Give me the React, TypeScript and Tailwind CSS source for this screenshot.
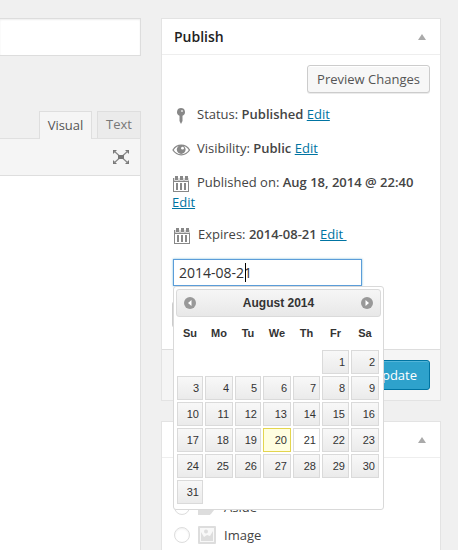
import React from "react";

const CollapseArrow = () => (
  <svg width="8" height="6" viewBox="0 0 8 6" aria-hidden="true">
    <path d="M4 0l4 6H0z" fill="#aaa" />
  </svg>
);

const rowIcon = "-my-1 mr-1.5 inline-block align-middle";

const PinIcon = () => (
  <svg className={rowIcon} width="19" height="18" viewBox="0 0 19 18" aria-hidden="true">
    <path d="M9 1a4 4 0 0 1 1.500 7.700V14L9 17 7.500 14V8.700A4 4 0 0 1 9 1z" fill="#888" />
    <circle cx="10" cy="4" r="1.100" fill="#ddd" />
  </svg>
);

const EyeIcon = () => (
  <svg className={rowIcon} width="19" height="18" viewBox="0 0 19 18" aria-hidden="true">
    <path d="M1 9C5 2.600 13.500 2.600 17.500 9 13.500 15.400 5 15.400 1 9z" fill="#fff" stroke="#888" strokeWidth="1.300" />
    <circle cx="9.200" cy="8.500" r="4.400" fill="#888" />
    <circle cx="10.500" cy="7.200" r="1.400" fill="#fff" />
  </svg>
);

const CalendarIcon = () => (
  <svg className={rowIcon} width="19" height="18" viewBox="0 0 19 18" aria-hidden="true">
    <path fillRule="evenodd" d="M1 3h16v14H1zM2 7v9h14V7z" fill="#888" />
    <path d="M3 1h3v4H3zM8 1h3v4H8zM13 1h3v4h-3z" fill="#888" />
    <path d="M2.500 3v2.500h4V3M7.500 3v2.500h4V3M12.500 3v2.500h4V3" fill="none" stroke="#ddd" strokeWidth="1" />
    <path d="M4 8h2v7H4zM8 8h2v7H8zM12 8h2v7h-2z" fill="#888" />
  </svg>
);

const FullscreenIcon = () => (
  <svg width="16" height="14" viewBox="0 0 16 14" aria-hidden="true">
    <path d="M0 0h4L0 4zM16 0h-4l4 4zM0 14h4l-4-4zM16 14h-4l4-4z" fill="#777" />
    <path d="M1 1l5 4.500M15 1l-5 4.500M1 13l5-4.500M15 13l-5-4.500" stroke="#888" strokeWidth="1.200" />
    <path d="M5 5h6v4H5z" fill="#777" />
  </svg>
);

const AsideIcon = () => (
  <svg width="18" height="18" viewBox="0 0 18 18" aria-hidden="true">
    <path d="M0 0h18v8h-5v9H0z" fill="#ddd" />
    <path d="M12 17.500L18.500 10" stroke="#fff" strokeWidth="1" />
    <path d="M13 16V9.500h5z" fill="#ddd" />
  </svg>
);

const ImageIcon = () => (
  <svg width="18" height="18" viewBox="0 0 18 18" aria-hidden="true">
    <rect width="18" height="18" rx="1" fill="#ddd" />
    <rect x="2" y="2" width="14" height="14" fill="#f8f8f8" />
    <circle cx="8" cy="5.500" r="2" fill="#ddd" />
    <path d="M3 6l3 5 3-2 3 1 3-5v10H3z" fill="#ddd" />
  </svg>
);

const ArrowCircle = ({ next = false }: { next?: boolean }) => (
  <svg width="12" height="12" viewBox="0 0 12 12" aria-hidden="true">
    <circle cx="6" cy="6" r="6" fill="#999" />
    <path d={next ? "M4.500 3L8 6 4.500 9z" : "M7.500 3L4 6l3.500 3z"} fill="#fff" />
  </svg>
);

const EditLink = ({ children = "Edit" }: { children?: React.ReactNode }) => (
  <a href="#" className="whitespace-pre text-[#0074a2] underline underline-offset-1">
    {children}
  </a>
);

const PanelHeader = ({ title, label }: { title?: string; label: string }) => (
  <header className="flex h-9 items-center justify-between border-b border-[#eee] pl-3 pr-3.5">
    {title ? <h2 className="text-sm font-semibold text-[#222]">{title}</h2> : <span />}
    <button type="button" aria-label={label}>
      <CollapseArrow />
    </button>
  </header>
);

const days = ["Su", "Mo", "Tu", "We", "Th", "Fr", "Sa"];
const columns = ["w-[28px]", "w-[30px]", "w-[28px]", "w-[30px]", "w-[29px]", "w-[29px]", "w-[30px]"];
const weeks = Array.from({ length: 6 }, (_, w) =>
  days.map((_, d) => {
    const n = w * 7 + d - 4;
    return n >= 1 && n <= 31 ? n : null;
  })
);

const dayStyle = (n: number) => {
  if (n === 20) return "border-[#e3d54f] bg-[#fffee0]";
  if (n === 21) return "border-[#ddd] bg-white";
  return "border-[#dadada] bg-linear-to-b from-[#f8f8f8] to-[#ebebeb]";
};

const DatePicker = () => (
  <div className="absolute left-0 top-full z-10 w-[211px] rounded-[3px] border border-[#d9d9d9] bg-white px-0.5 pb-1 pt-0.5 font-['Liberation_Sans',Arial,sans-serif] text-[11px] text-[#333]">
    <div className="flex h-[28px] items-center justify-between rounded-[3px] border border-[#dadada] bg-linear-to-b from-[#f6f6f6] to-[#e8e8e8] px-[7px]">
      <button type="button" aria-label="Previous month">
        <ArrowCircle />
      </button>
      <span className="text-xs font-bold">August 2014</span>
      <button type="button" aria-label="Next month">
        <ArrowCircle next />
      </button>
    </div>
    <table className="w-[204px] table-fixed border-collapse">
      <colgroup>
        {columns.map((c, i) => (
          <col key={i} className={c} />
        ))}
      </colgroup>
      <thead>
        <tr className="h-8">
          {days.map((d) => (
            <th key={d} scope="col" className="p-0 text-center font-bold">
              {d}
            </th>
          ))}
        </tr>
      </thead>
      <tbody>
        {weeks.map((week, w) => (
          <tr key={w} className="h-[26px]">
            {week.map((n, d) => (
              <td key={d} className="p-px">
                {n && (
                  <button
                    type="button"
                    className={`block h-6 w-full border pr-[3px] text-right ${dayStyle(n)}`}
                  >
                    {n}
                  </button>
                )}
              </td>
            ))}
          </tr>
        ))}
      </tbody>
    </table>
  </div>
);

const formats = [
  { id: "aside", label: "Aside", icon: <AsideIcon /> },
  { id: "image", label: "Image", icon: <ImageIcon /> },
];

export default function App() {
  return (
    <div className="flex h-screen gap-5 overflow-hidden bg-[#f0f0f0] pr-[17px] pt-[18px] font-['Open_Sans',sans-serif] text-[13px] leading-5 text-[#444]">
      <main className="flex min-w-0 flex-1 flex-col">
        <input
          type="text"
          aria-label="Title"
          className="h-[38px] w-full border border-l-0 border-[#ddd] bg-white px-2 shadow-[inset_0_1px_2px_rgba(0,0,0,0.07)] outline-none"
        />
        <div className="relative mt-[55px] flex justify-end gap-[5px]">
          <button type="button" className="-mb-px h-7 w-[53px] border border-b-0 border-[#dedede] bg-[#f5f5f5] pb-0.5 text-[#555]">
            Visual
          </button>
          <button type="button" className="h-[27px] w-11 border border-b-0 border-[#dedede] bg-[#ebebeb] pb-0.5 text-[#777]">
            Text
          </button>
        </div>
        <section className="flex flex-1 flex-col border-r border-t border-[#e0e0e0] bg-white">
          <div className="flex h-[37px] items-center justify-end border-b border-[#dedede] bg-[#f5f5f5] pr-[11px]">
            <button type="button" aria-label="Distraction-free writing">
              <FullscreenIcon />
            </button>
          </div>
        </section>
      </main>

      <aside className="flex w-[280px] shrink-0 flex-col gap-5">
        <section className="border border-[#e3e3e3] bg-white">
          <PanelHeader title="Publish" label="Toggle publish panel" />
          <div className="px-2.5 pb-[21px] pt-2.5">
            <div className="flex justify-end">
              <button
                type="button"
                className="h-7 w-[123px] rounded-[3px] border border-[#ccc] bg-[#f7f7f7] text-[#555] shadow-[inset_0_1px_0_#fff,0_1px_0_rgba(0,0,0,0.08)]"
              >
                Preview Changes
              </button>
            </div>
            <div className="mt-[11px] flex flex-col gap-3.5">
              <p>
                <PinIcon />
                Status: <b className="font-semibold">Published</b> <EditLink />
              </p>
              <p>
                <EyeIcon />
                Visibility: <b className="font-semibold">Public</b> <EditLink />
              </p>
              <p>
                <CalendarIcon />
                Published on: <b className="font-semibold">Aug 18, 2014 @ 22:40</b> <EditLink />
              </p>
            </div>
            <div className="mt-3 pl-px">
              <p>
                <CalendarIcon />
                Expires: <b className="font-semibold">2014-08-21</b> <EditLink>{"Edit "}</EditLink>
              </p>
              <div className="relative mt-[15px] w-[189px]">
                <input
                  type="text"
                  aria-label="Expiry date"
                  defaultValue="2014-08-21"
                  className="block h-[27px] w-full border border-[#5b9dd9] bg-white px-[5px] text-sm text-[#333] shadow-[0_0_2px_rgba(30,140,190,0.6)] outline-none"
                />
                <span className="absolute left-[72px] top-1 h-[19px] w-px bg-black" />
                <DatePicker />
              </div>
            </div>
            <button
              type="button"
              aria-label="Save expiry date"
              className="mt-[15px] block h-[27px] w-10 rounded-[3px] border border-[#ccc] bg-[#f7f7f7]"
            />
          </div>
          <footer className="flex justify-end border-t border-[#ddd] bg-[#f5f5f5] p-2.5">
            <button
              type="button"
              className="h-[30px] rounded-[3px] border border-[#0074a2] bg-[#2ea2cc] px-3 text-white shadow-[inset_0_1px_0_rgba(120,200,230,0.5)]"
            >
              Update
            </button>
          </footer>
        </section>

        <section className="border border-[#e3e3e3] bg-white">
          <PanelHeader label="Toggle format panel" />
          <div className="flex flex-col gap-2 px-3 pb-4 pt-[39px]">
            {formats.map((f) => (
              <label key={f.id} className="flex items-center">
                <input
                  type="radio"
                  name="format"
                  className="mr-2 size-4 appearance-none rounded-full border border-[#ddd] bg-white shadow-[inset_0_1px_2px_rgba(0,0,0,0.06)]"
                />
                {f.icon}
                <span className="ml-2">{f.label}</span>
              </label>
            ))}
          </div>
        </section>
      </aside>
    </div>
  );
}
